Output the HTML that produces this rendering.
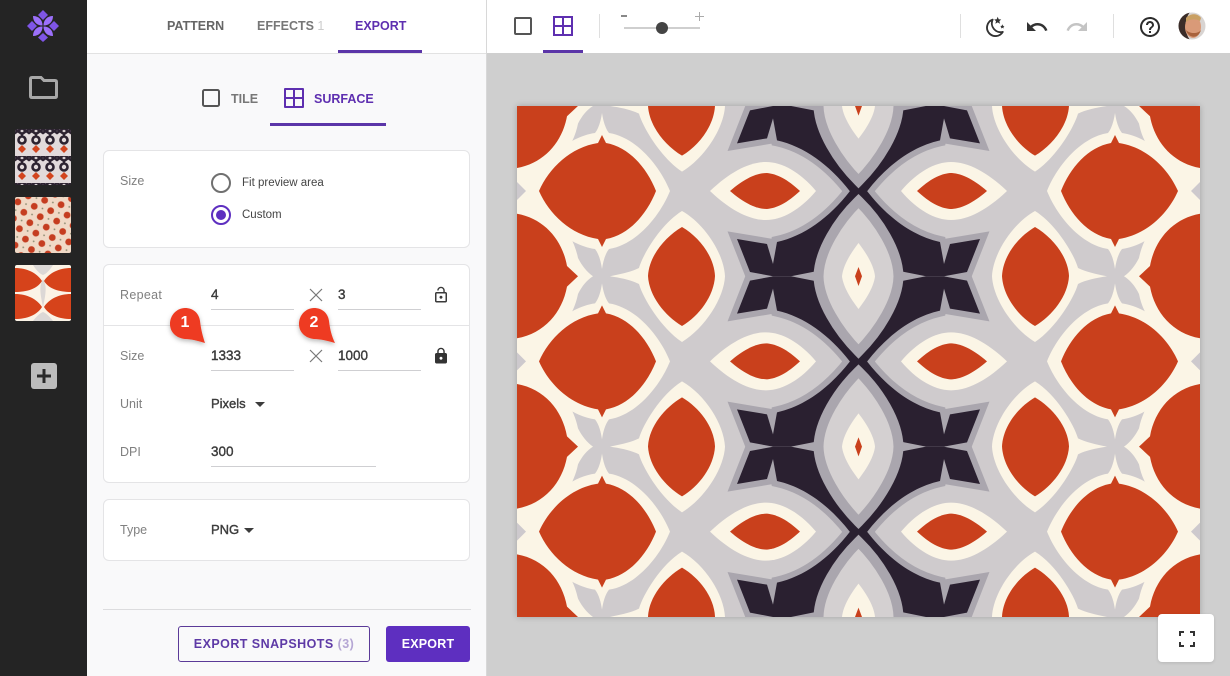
<!DOCTYPE html>
<html><head><meta charset="utf-8"><style>
html,body{margin:0;padding:0}
body{width:1230px;height:676px;position:relative;overflow:hidden;background:#cfcfcf;font-family:"Liberation Sans",sans-serif}
.a{position:absolute;white-space:nowrap}
.card{position:absolute;left:103px;width:365px;background:#fff;border:1px solid #e4e4e6;border-radius:6px}
.lab{position:absolute;left:120px;font-size:12.5px;color:#808080;line-height:16px;white-space:nowrap}
.val{position:absolute;font-size:13.5px;color:#3c3c3c;line-height:16px;-webkit-text-stroke:.4px #3c3c3c;white-space:nowrap}
.ln{position:absolute;height:1px;background:#cfcfd2}
.tab{position:absolute;font-size:12.5px;font-weight:bold;line-height:16px;white-space:nowrap}
.caret{position:absolute;width:0;height:0;border-left:5px solid transparent;border-right:5px solid transparent;border-top:5px solid #3c3c3c}
svg{position:absolute;display:block}
</style></head><body>
<div class="a" style="left:0;top:0;width:87px;height:676px;background:#242424"></div>
<div class="a" style="left:87px;top:0;width:399px;height:676px;background:#f9f9fa"></div>
<div class="a" style="left:87px;top:0;width:400px;height:53px;background:#fff;border-bottom:1px solid #e2e2e2"></div>
<div class="a" style="left:486px;top:0;width:1px;height:676px;background:#d8d8d8"></div>
<div class="a" style="left:487px;top:0;width:743px;height:53px;background:#fff"></div>

<svg style="left:0;top:0" width="87" height="53" viewBox="0 0 87 53">
<g fill="#7f55e6"><path d="M43,10 L48,15 L43,20 L38,15Z"/><path d="M43,33 L48,37.500 L43,42 L38,37.500Z"/><path d="M32,21 L37,26 L32,31 L27,26Z"/><path d="M54,21 L59,26 L54,31 L49,26Z"/></g>
<g fill="#9c70fb"><path d="M42.500,25.500 C37,25.500 33,22 33,16 C39,16 42.500,20 42.500,25.500Z"/><path d="M43.500,25.500 C49,25.500 53,22 53,16 C47,16 43.500,20 43.500,25.500Z"/><path d="M42.500,26.500 C37,26.500 33,30 33,36 C39,36 42.500,32 42.500,26.500Z"/><path d="M43.500,26.500 C49,26.500 53,30 53,36 C47,36 43.500,32 43.500,26.500Z"/></g>
</svg>
<svg style="left:28px;top:75px" width="31" height="25" viewBox="0 0 31 25"><path d="M2.500,4 Q2.500,2.500 4,2.500 H13 L16,5.500 H27 Q28.500,5.500 28.500,7 V21 Q28.500,22.500 27,22.500 H4 Q2.500,22.500 2.500,21Z" fill="none" stroke="#a8a8a8" stroke-width="3"/></svg>

<svg style="left:15px;top:129px;border-radius:2px" width="56" height="56" viewBox="0 0 56 56">
<defs><pattern id="t1" width="14" height="27" patternUnits="userSpaceOnUse"><rect width="14" height="27" fill="#e2dadb"/><path d="M-3,-2 L7,5 L17,-2 M-3,6 L7,-1 L17,6" fill="none" stroke="#2c2230" stroke-width="2.600"/><circle cx="7" cy="11" r="3.500" fill="none" stroke="#2c2230" stroke-width="2.600"/><path d="M7,5 V8" stroke="#2c2230" stroke-width="2"/><path d="M7,16 L11,20 L7,24 L3,20Z" fill="#d2441e"/></pattern>
<pattern id="t2" width="17" height="17" patternUnits="userSpaceOnUse" patternTransform="rotate(15)"><rect width="17" height="17" fill="#f0d9c6"/><circle cx="4" cy="4" r="3.400" fill="#c53d20"/><circle cx="12.500" cy="12.500" r="3.400" fill="#c53d20"/><circle cx="12.500" cy="4" r=".9" fill="#8a8a70"/><circle cx="4" cy="12.500" r=".9" fill="#8a8a70"/></pattern></defs>
<rect width="56" height="56" fill="url(#t1)"/></svg>
<svg style="left:15px;top:197px;border-radius:2px" width="56" height="56"><rect width="56" height="56" fill="url(#t2)"/></svg>
<svg style="left:15px;top:265px;border-radius:2px" width="56" height="56" viewBox="0 0 56 56"><rect width="56" height="56" fill="#fbf3e6"/><path d="M18,0 H38 C35,5 31,9 28,10 C25,9 21,5 18,0Z M18,56 H38 C35,52 31,48 28,47 C25,48 21,52 18,56Z" fill="#dcd8d6"/><path d="M28,14 C25,20 24,24 28,42 C32,24 31,20 28,14Z" fill="#dcd8d6"/><path d="M0,3 C12,3 22,8 27,16 C22,24 12,27 0,27Z M0,29 C12,29 22,34 27,42 C22,50 12,54 0,54Z M56,3 C44,3 34,8 29,16 C34,24 44,27 56,27Z M56,29 C44,29 34,34 29,42 C34,50 44,54 56,54Z" fill="#d6431b"/></svg>

<svg style="left:31px;top:363px" width="26" height="26"><rect width="26" height="26" rx="3" fill="#bcbcbc"/><path d="M13,6 V20 M6,13 H20" stroke="#2a2a2a" stroke-width="3"/></svg>

<div class="tab" style="left:167px;top:18px;color:#666">PATTERN</div>
<div class="tab" style="left:257px;top:18px;color:#777">EFFECTS <span style="color:#ccc;font-weight:normal">1</span></div>
<div class="tab" style="left:355px;top:18px;color:#5e2fb0">EXPORT</div>
<div class="a" style="left:338px;top:50px;width:84px;height:3px;background:#5b35a8"></div>

<svg style="left:201px;top:88px" width="20" height="20"><rect x="2" y="2" width="16" height="16" rx="1.500" fill="none" stroke="#555" stroke-width="2"/></svg>
<div class="tab" style="left:231px;top:91px;color:#777">TILE</div>
<svg style="left:283px;top:87px" width="22" height="22"><path d="M2,2 H20 V20 H2Z M11,2 V20 M2,11 H20" fill="none" stroke="#5e2fb0" stroke-width="2" stroke-linejoin="round"/></svg>
<div class="tab" style="left:314px;top:91px;color:#5e2fb0">SURFACE</div>
<div class="a" style="left:270px;top:123px;width:116px;height:3px;background:#5b35a8"></div>

<div class="card" style="top:150px;height:96px"></div>
<div class="lab" style="top:173px">Size</div>
<svg style="left:210px;top:171px" width="24" height="56"><circle cx="11" cy="12" r="9" fill="none" stroke="#707070" stroke-width="2"/><circle cx="11" cy="44" r="9" fill="none" stroke="#5e2fc0" stroke-width="2"/><circle cx="11" cy="44" r="5" fill="#5e2fc0"/></svg>
<div class="a" style="left:242px;top:175px;font-size:11.500px;line-height:16px;color:#444">Fit preview area</div>
<div class="a" style="left:242px;top:207px;font-size:11.500px;line-height:16px;color:#444">Custom</div>

<div class="card" style="top:264px;height:217px"></div>
<div class="a" style="left:104px;top:325px;width:365px;height:1px;background:#e4e4e6"></div>
<div class="lab" style="top:287px;letter-spacing:.3px">Repeat</div>
<div class="val" style="left:211px;top:287px">4</div>
<div class="ln" style="left:211px;top:309px;width:83px"></div>
<svg style="left:309px;top:288px" width="14" height="14"><path d="M1,1 L13,13 M13,1 L1,13" stroke="#777" stroke-width="1.200"/></svg>
<div class="val" style="left:338px;top:287px">3</div>
<div class="ln" style="left:338px;top:309px;width:83px"></div>
<svg style="left:432px;top:286px" width="18" height="18" viewBox="0 0 24 24"><path fill="#3a3a3a" d="M12 17c1.100 0 2-.9 2-2s-.9-2-2-2-2 .9-2 2 .9 2 2 2zm6-9h-1V6c0-2.760-2.240-5-5-5S7 3.240 7 6h1.900c0-1.710 1.390-3.100 3.100-3.100 1.710 0 3.100 1.390 3.100 3.100v2H6c-1.100 0-2 .9-2 2v10c0 1.100.9 2 2 2h12c1.100 0 2-.9 2-2V10c0-1.100-.9-2-2-2zm0 12H6V10h12v10z"/></svg>

<div class="lab" style="top:348px">Size</div>
<div class="val" style="left:211px;top:348px">1333</div>
<div class="ln" style="left:211px;top:370px;width:83px"></div>
<svg style="left:309px;top:349px" width="14" height="14"><path d="M1,1 L13,13 M13,1 L1,13" stroke="#777" stroke-width="1.200"/></svg>
<div class="val" style="left:338px;top:348px">1000</div>
<div class="ln" style="left:338px;top:370px;width:83px"></div>
<svg style="left:432px;top:347px" width="18" height="18" viewBox="0 0 24 24"><path fill="#333" d="M18 8h-1V6c0-2.760-2.240-5-5-5S7 3.240 7 6v2H6c-1.100 0-2 .9-2 2v10c0 1.100.9 2 2 2h12c1.100 0 2-.9 2-2V10c0-1.100-.9-2-2-2zm-6 9c-1.100 0-2-.9-2-2s.9-2 2-2 2 .9 2 2-.9 2-2 2zm3.100-9H8.900V6c0-1.710 1.390-3.100 3.100-3.100 1.710 0 3.100 1.390 3.100 3.100v2z"/></svg>

<div class="lab" style="top:396px">Unit</div>
<div class="val" style="left:211px;top:396px;font-size:13px">Pixels</div>
<div class="caret" style="left:255px;top:402px"></div>
<div class="lab" style="top:444px">DPI</div>
<div class="val" style="left:211px;top:444px">300</div>
<div class="ln" style="left:211px;top:466px;width:165px"></div>

<div class="card" style="top:499px;height:60px"></div>
<div class="lab" style="top:522px">Type</div>
<div class="val" style="left:211px;top:522px;font-size:13px">PNG</div>
<div class="caret" style="left:244px;top:528px"></div>

<div class="a" style="left:103px;top:609px;width:368px;height:1px;background:#dcdcde"></div>
<div class="a" style="left:178px;top:626px;width:190px;height:34px;border:1px solid #5b3a98;border-radius:3px;line-height:34px;text-align:center;font-size:12.500px;font-weight:bold;letter-spacing:.45px;color:#5e3aa6">EXPORT SNAPSHOTS <span style="color:#b5a6d4">(3)</span></div>
<div class="a" style="left:386px;top:626px;width:84px;height:36px;background:#5e2fc0;border-radius:3px;line-height:36px;text-align:center;font-size:12.500px;font-weight:bold;letter-spacing:.2px;color:#fff">EXPORT</div>

<svg style="left:165px;top:303px;overflow:visible" width="180" height="48" viewBox="165 303 180 48">
<defs><filter id="ps" x="-30%" y="-30%" width="170%" height="170%"><feDropShadow dx="0" dy="2" stdDeviation="2.500" flood-color="#000" flood-opacity=".28"/></filter></defs>
<path filter="url(#ps)" fill="#ee3a20" d="M185,308 C193,308 199,313 200,321 C201,330 203,337 205,343 C198,341 192,339 185,339 C176,338 170,332 170,324 C170,315 177,308 185,308Z"/>
<path filter="url(#ps)" fill="#ee3a20" d="M314,308 C322,308 328,313 329,321 C330,330 332,337 335,343 C328,341 321,339 314,339 C305,338 299,332 299,324 C299,315 306,308 314,308Z"/>
</svg>
<div class="a" style="left:170px;top:314px;width:30px;text-align:center;color:#fff;font-weight:bold;font-size:16px;line-height:18px">1</div>
<div class="a" style="left:299px;top:314px;width:30px;text-align:center;color:#fff;font-weight:bold;font-size:16px;line-height:18px">2</div>

<svg style="left:513px;top:16px" width="20" height="20"><rect x="2" y="2" width="16" height="16" rx="1" fill="none" stroke="#555" stroke-width="2"/></svg>
<svg style="left:552px;top:15px" width="22" height="22"><path d="M2,2 H20 V20 H2Z M11,2 V20 M2,11 H20" fill="none" stroke="#5e2fb0" stroke-width="2"/></svg>
<div class="a" style="left:543px;top:50px;width:40px;height:3px;background:#5b35a8"></div>
<div class="a" style="left:599px;top:14px;width:1px;height:24px;background:#dfdfdf"></div>
<div class="a" style="left:621px;top:15px;width:6px;height:2px;background:#888"></div>
<svg style="left:695px;top:11px" width="9" height="11"><path d="M4.500,1 V10 M0,5.500 H9" stroke="#aaa" stroke-width="1"/></svg>
<div class="a" style="left:624px;top:27px;width:76px;height:2px;background:#cfcfcf"></div>
<div class="a" style="left:656px;top:22px;width:12px;height:12px;border-radius:50%;background:#444"></div>
<div class="a" style="left:960px;top:14px;width:1px;height:24px;background:#dfdfdf"></div>
<div class="a" style="left:1113px;top:14px;width:1px;height:24px;background:#dfdfdf"></div>

<svg style="left:985px;top:15px" width="22" height="22" viewBox="0 0 26 26"><path d="M9,5.500 A10,10 0 1,0 21,20 A10.500,10.500 0 0 1 9,5.500Z" fill="none" stroke="#333" stroke-width="2.200" stroke-linejoin="round"/><path d="M15,2 L16.200,5 L19.200,5.300 L17,7.300 L17.700,10.300 L15,8.700 L12.300,10.300 L13,7.300 L10.800,5.300 L13.800,5Z" fill="#333"/><path d="M20.500,11 L21.300,12.800 L23,13 L21.800,14.200 L22.100,16 L20.500,15.100 L18.900,16 L19.200,14.200 L18,13 L19.700,12.800Z" fill="#333"/></svg>
<svg style="left:1025px;top:15px" width="24" height="24" viewBox="0 0 24 24"><path fill="#333" d="M12.500 8c-2.650 0-5.050.99-6.900 2.600L2 7v9h9l-3.620-3.620c1.390-1.160 3.160-1.880 5.120-1.880 3.540 0 6.550 2.310 7.600 5.500l2.370-.78C21.080 11.030 17.150 8 12.500 8z"/></svg>
<svg style="left:1065px;top:15px" width="24" height="24" viewBox="0 0 24 24"><path fill="#c4c4c4" d="M18.400 10.600C16.550 8.990 14.150 8 11.500 8c-4.650 0-8.580 3.030-9.960 7.220L3.900 16c1.050-3.190 4.050-5.500 7.600-5.500 1.950 0 3.730.72 5.120 1.880L13 16h9V7l-3.600 3.600z"/></svg>
<svg style="left:1138px;top:15px" width="24" height="24" viewBox="0 0 24 24"><path fill="#2c2c2c" d="M11 18h2v-2h-2v2zm1-16C6.480 2 2 6.480 2 12s4.480 10 10 10 10-4.480 10-10S17.520 2 12 2zm0 18c-4.410 0-8-3.590-8-8s3.590-8 8-8 8 3.590 8 8-3.590 8-8 8zm0-14c-2.210 0-4 1.790-4 4h2c0-1.100.9-2 2-2s2 .9 2 2c0 2-3 1.750-3 5h2c0-2.250 3-2.500 3-5 0-2.210-1.790-4-4-4z"/></svg>
<svg style="left:1178px;top:12px" width="28" height="28" viewBox="0 0 28 28"><defs><clipPath id="av"><circle cx="14" cy="14" r="13.500"/></clipPath></defs><g clip-path="url(#av)"><rect width="28" height="28" fill="#d8d4d2"/><path d="M0,0 H12 C6,8 6,20 12,28 H0Z" fill="#3a2c28"/><ellipse cx="15" cy="15" rx="8" ry="11" fill="#d99a78"/><path d="M8,6 C12,1 20,1 23,6 L22,9 C17,6 12,7 8,10Z" fill="#c9a063"/><path d="M8,18 C10,26 20,28 23,18 C20,22 12,22 8,18Z" fill="#a8623c"/></g></svg>

<svg style="left:517px;top:106px;box-shadow:0 0 6px rgba(0,0,0,.22)" width="683" height="511" viewBox="0 0 683 511">
<defs>
<path id="bigleaf" d="M22,85 C32,62 54,41 81,37 L85,29 L89,37 C112,41 130,62 139,85 C130,108 112,129 89,133 L85,141 L81,133 C54,129 32,108 22,85Z"/>
<path id="bigleafC" d="M13,85 C24,56 50,31 78,27 C82,22 84,14 85,7 C86,14 88,22 92,27 C118,31 142,58 153,85 C142,112 118,139 92,143 C88,148 86,156 85,163 C84,156 82,148 78,143 C50,139 24,114 13,85Z"/>
<path id="halfleaf" d="M-5,107 C25,110 45,132 50,160 L61,170.300 L50,180.600 C45,208 25,230 -5,233Z"/>
<path id="halfleafC" d="M-5,96 C32,99 55,122 61,152 C65,160 70,166 76,170.300 C70,174 65,180 61,188 C55,218 32,241 -5,244Z"/>
<path id="vleaf" d="M165,121 C182,131 197,150 198,170 C197,190 182,210 165,220 C148,210 132,190 131,170 C132,150 148,131 165,121Z"/>
<path id="vleafC" d="M165,105 C188,118 207,148 208,170.300 C207,192 188,222 165,236 C144,222 126,192 122,178 C114,174 104,172 93,170.300 C104,168 114,166 122,162 C126,148 144,118 165,105Z"/>
<path id="heye" d="M213,85 C228,72 240,67 250,67 C260,68 270,73 283,85 C270,97 260,102 250,103 C240,103 228,98 213,85Z"/>
<path id="heyeC" d="M193,85 C213,66 232,56 249,56 C265,56 283,66 299,85 C283,104 265,114 249,114 C232,114 213,104 193,85Z"/>
<path id="darkH" d="M333,85 C312,112 287,130 260,136 L256,158 L250,138 L220,133 L233,166 L256,170.300 L345,170.300 V85Z"/>
<g id="dark2"><use href="#darkH"/><use href="#darkH" transform="matrix(1 0 0 -1 0 170.330)"/></g>
<g id="darkAll"><use href="#dark2"/><use href="#dark2" y="170.330"/><use href="#dark2" y="340.670"/></g>
<g id="creamS"><use href="#bigleafC"/><use href="#halfleafC"/><use href="#vleafC"/><use href="#heyeC"/><rect x="0" y="60" width="26" height="50"/></g>
<g id="redS"><use href="#bigleaf"/><use href="#halfleaf"/><use href="#vleaf"/><use href="#heye"/></g>
<path id="gt" d="M0,76 L9,85 L0,94Z"/>
<g id="half">
<g fill="#fbf5e6"><use href="#creamS" y="-170.330"/><use href="#creamS"/><use href="#creamS" y="170.330"/><use href="#creamS" y="340.670"/></g>
<g fill="#c9401c"><use href="#redS" y="-170.330"/><use href="#redS"/><use href="#redS" y="170.330"/><use href="#redS" y="340.670"/></g>
<g fill="#cdc9cd"><use href="#gt"/><use href="#gt" y="170.330"/><use href="#gt" y="340.670"/></g>
</g>
<g id="ceye"><path d="M341.500,95 C362,115 381,145 381.500,170.300 C381,195 362,225 341.500,245.600 C321,225 302,195 301.500,170.300 C302,145 321,115 341.500,95Z" fill="#d4d0d1" stroke="#aaa6ae" stroke-width="10"/><path d="M341.500,137 C350,148 357,160 358,170.300 C357,180 350,192 341.500,203 C333,192 326,180 325,170.300 C326,160 333,148 341.500,137Z" fill="#fbf5e6"/><path d="M341.500,161 L345,170.300 L341.500,180 L338,170.300Z" fill="#c9401c"/><path d="M298,165.500 L274,170.300 L298,175Z M385,165.500 L409,170.300 L385,175Z" fill="#aaa6ae"/></g>
</defs>
<rect width="683" height="511" fill="#cfcbcd"/>
<g fill="none" stroke="#aaa6ae" stroke-width="12" stroke-linejoin="miter" stroke-miterlimit="6"><use href="#darkAll"/><use href="#darkAll" transform="translate(683,0) scale(-1,1)"/></g>
<g fill="#2a2030"><use href="#darkAll"/><use href="#darkAll" transform="translate(683,0) scale(-1,1)"/></g>
<use href="#half"/>
<use href="#half" transform="translate(683,0) scale(-1,1)"/>
<use href="#ceye" y="-170.330"/><use href="#ceye"/><use href="#ceye" y="170.330"/><use href="#ceye" y="340.670"/>
</svg>

<div class="a" style="left:1158px;top:614px;width:56px;height:48px;background:#fff;border-radius:4px;box-shadow:0 1px 3px rgba(0,0,0,.12)"></div>
<svg style="left:1179px;top:631px" width="16" height="16"><path d="M1,5 V1 H5 M11,1 H15 V5 M15,11 V15 H11 M5,15 H1 V11" fill="none" stroke="#333" stroke-width="2"/></svg>
</body></html>
